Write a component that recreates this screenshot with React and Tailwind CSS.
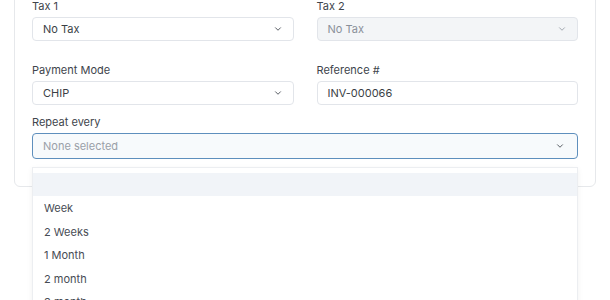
import React from 'react'

const Chevron = ({ className }) => (
    <svg width="10" height="10" viewBox="0 0 10 10" fill="none" className={className}>
        <path d="M2.5 3.75 L5 6.25 L7.5 3.75" stroke="currentColor" strokeWidth="1" strokeLinecap="round" strokeLinejoin="round" />
    </svg>
)

function Select({ value, disabled }) {
    return (
        <div
            className={`h-6 flex items-center justify-between pl-[10px] pr-[10px] rounded border border-[#e2e5ea] ${disabled ? 'bg-[#f3f5f7] text-[#8a9099]' : 'bg-white text-[#3a3f46]'}`}
        >
            <span>{value}</span>
            <Chevron className={disabled ? 'text-[#a3a9b1]' : 'text-[#5a5f66]'} />
        </div>
    )
}

function Label({ children }) {
    return <div className="h-4 leading-4 text-[#40454c] mb-[3px]">{children}</div>
}

const options = ['Week', '2 Weeks', '1 Month', '2 month', '3 month', '6 month', '1 Year']

export default function App() {
    return (
        <div className="min-h-[300px] bg-white text-[11px] font-['Inter',sans-serif] relative overflow-hidden">
            <div className="mx-[14px] -mt-[20px] pt-[17px] pb-[27px] px-[17px] border border-[#e6e8eb] rounded-md bg-white">
                <div className="grid grid-cols-2 gap-x-[23px]">
                    <div>
                        <Label>Tax 1</Label>
                        <Select value="No Tax" />
                    </div>
                    <div>
                        <Label>Tax 2</Label>
                        <Select value="No Tax" disabled />
                    </div>
                </div>
                <div className="grid grid-cols-2 gap-x-[23px] mt-[21px]">
                    <div>
                        <Label>Payment Mode</Label>
                        <Select value="CHIP" />
                    </div>
                    <div>
                        <Label>Reference #</Label>
                        <div className="h-6 flex items-center px-[10px] rounded border border-[#e2e5ea] text-[#3a3f46]">INV-000066</div>
                    </div>
                </div>
                <div className="mt-[9px] relative">
                    <Label>Repeat every</Label>
                    <div className="h-[26px] flex items-center justify-between pl-[10px] pr-[12px] rounded border-[1.5px] border-[#5e8fbd] bg-[#f7fafc] text-[#9aa0a8]">
                        <span>None selected</span>
                        <Chevron className="text-[#5a5f66]" />
                    </div>
                    <div className="absolute left-0 right-0 top-[53px] bg-white border border-[#eceef1] shadow-[0_2px_6px_rgba(0,0,0,0.06)] z-10">
                        <div className="mt-[5px] h-[23px] bg-[#f1f4f8]" />
                        <div className="pt-[1px]">
                            {options.map(o => (
                                <div key={o} className="h-[23.5px] leading-[23.5px] px-[11px] text-[#474c54]">{o}</div>
                            ))}
                        </div>
                    </div>
                </div>
            </div>
        </div>
    )
}
